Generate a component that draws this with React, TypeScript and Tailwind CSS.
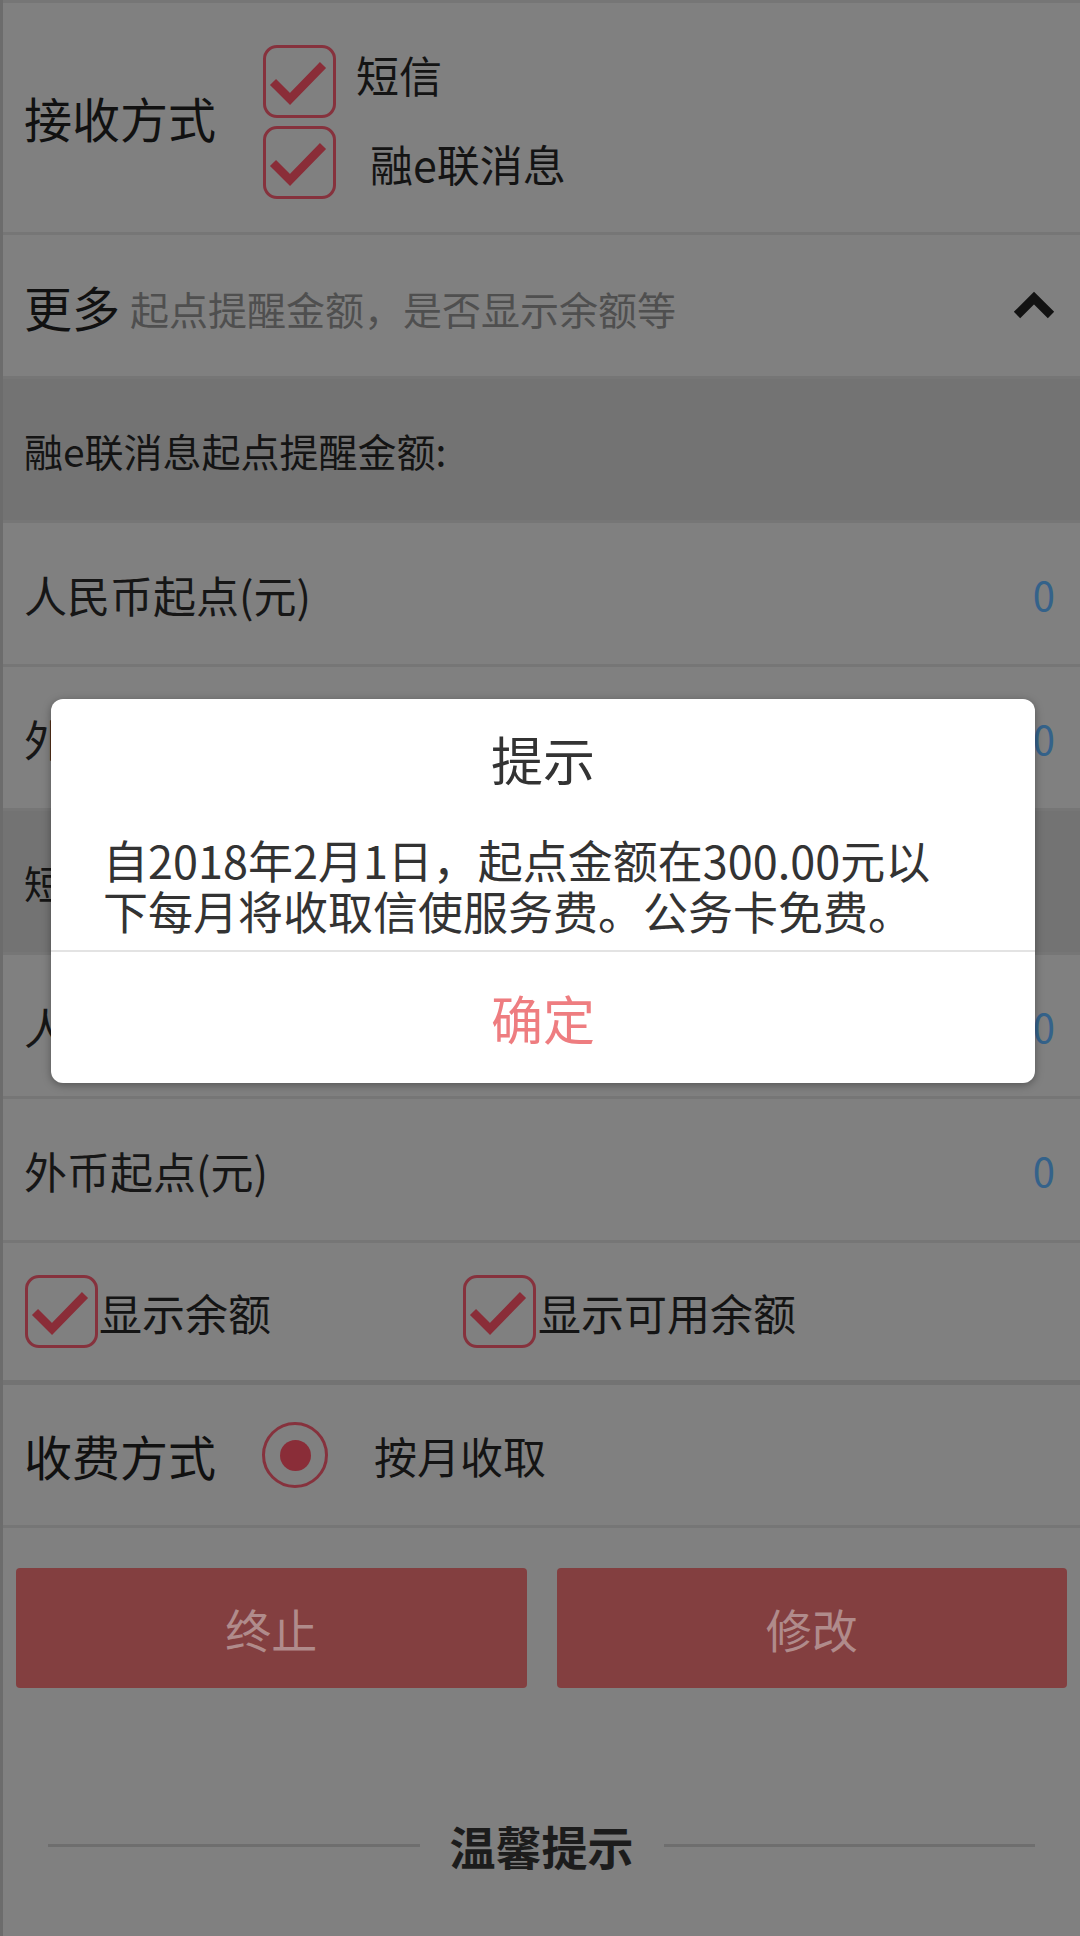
import React from "react";

const FONT = { fontFamily: '"Noto Sans CJK SC", "Noto Sans", sans-serif' };

function CheckBox() {
  return (
    <div className="w-[73px] h-[73px] shrink-0 rounded-[14px] border-[3px] border-[#86323d] flex items-center justify-center">
      <svg width="73" height="73" viewBox="0 0 73 73" className="shrink-0">
        <polyline
          points="10,37 27,54 60,20"
          fill="none"
          stroke="#8a2d38"
          strokeWidth="8.5"
          strokeLinecap="butt"
          strokeLinejoin="miter"
        />
      </svg>
    </div>
  );
}

function Radio() {
  return (
    <div className="w-[66px] h-[66px] shrink-0 rounded-full border-[3px] border-[#86323d] flex items-center justify-center">
      <div className="w-[31px] h-[31px] rounded-full bg-[#8a2d38]" />
    </div>
  );
}

function ValueRow({ label }: { label: string }) {
  return (
    <div className="h-[144px] border-b-[3px] border-[#767676] flex items-center justify-between pl-[21px] pr-[25px]">
      <span className="text-[43px] leading-[56px] text-[#161616]">{label}</span>
      <span className="text-[40px] leading-[56px] text-[#34628a]">0</span>
    </div>
  );
}

function HeaderRow({ label }: { label: string }) {
  return (
    <div className="h-[144px] border-b-[3px] border-[#767676] bg-[#737373] flex items-center pl-[21px]">
      <span className="text-[39px] leading-[50px] text-[#141414]">{label}</span>
    </div>
  );
}

export default function App() {
  return (
    <div
      className="relative w-[1080px] h-[1936px] overflow-hidden bg-[#808080] border-l-[3px] border-[#6c6c6c]"
      style={FONT}
    >
      {/* 接收方式 */}
      <div className="h-[235px] border-t-[3px] border-b-[3px] border-[#767676] flex items-center">
        <div className="w-[260px] shrink-0 pl-[21px] mb-[2px] text-[48px] leading-[56px] text-[#111111]">接收方式</div>
        <div className="self-start mt-[42px] flex flex-col gap-[8px]">
          <div className="flex items-start">
            <CheckBox />
            <span className="ml-[20px] mt-[4px] text-[43px] leading-[50px] text-[#141414]">短信</span>
          </div>
          <div className="flex items-center">
            <CheckBox />
            <span className="ml-[34px] text-[43px] leading-[50px] text-[#141414]">融e联消息</span>
          </div>
        </div>
      </div>

      {/* 更多 */}
      <div className="h-[144px] border-b-[3px] border-[#767676] flex items-center pl-[21px] pr-[25px]">
        <span className="text-[48px] leading-[56px] text-[#111111]">更多</span>
        <span className="ml-[10px] mt-[4px] text-[39px] leading-[50px] text-[#4f4f4f]">起点提醒金额，是否显示余额等</span>
        <div className="flex-1" />
        <svg width="42" height="30" viewBox="0 0 42 30" className="mb-[2px]">
          <polyline
            points="4,25 21,8 38,25"
            fill="none"
            stroke="#121212"
            strokeWidth="9"
            strokeLinecap="butt"
            strokeLinejoin="miter"
          />
        </svg>
      </div>

      <HeaderRow label="融e联消息起点提醒金额:" />
      <ValueRow label="人民币起点(元)" />
      <ValueRow label="外币起点(元)" />
      <HeaderRow label="短信起点提醒金额:" />
      <ValueRow label="人民币起点(元)" />
      <ValueRow label="外币起点(元)" />

      {/* 显示余额 */}
      <div className="h-[142px] border-b-[5px] border-[#737373] flex items-center pl-[22px]">
        <div className="w-[438px] shrink-0 flex items-center">
          <CheckBox />
          <span className="ml-[1px] text-[43px] leading-[50px] text-[#141414]">显示余额</span>
        </div>
        <div className="flex items-center">
          <CheckBox />
          <span className="ml-[2px] text-[43px] leading-[50px] text-[#141414]">显示可用余额</span>
        </div>
      </div>

      {/* 收费方式 */}
      <div className="h-[143px] border-b-[3px] border-[#767676] flex items-center">
        <div className="w-[259px] shrink-0 pl-[21px] text-[48px] leading-[56px] text-[#111111]">收费方式</div>
        <Radio />
        <span className="ml-[46px] text-[43px] leading-[50px] text-[#141414]">按月收取</span>
      </div>

      {/* buttons */}
      <div className="mt-[40px] px-[13px] flex gap-[30px]">
        <div className="flex-1 h-[120px] rounded-[4px] bg-[#833f40] flex items-center justify-center text-[46px] text-[#b08b8b]">
          终止
        </div>
        <div className="flex-1 h-[120px] rounded-[4px] bg-[#833f40] flex items-center justify-center text-[46px] text-[#b08b8b]">
          修改
        </div>
      </div>

      {/* 温馨提示 */}
      <div className="mt-[127px] px-[45px] flex items-center">
        <div className="flex-1 h-[3px] bg-[#6e6e6e]" />
        <span className="px-[30px] text-[46px] leading-[60px] font-bold text-[#1c1c1c]">温馨提示</span>
        <div className="flex-1 h-[3px] bg-[#6e6e6e]" />
      </div>

      {/* dialog */}
      <div className="absolute left-[48px] top-[699px] w-[984px] rounded-[12px] bg-white shadow-[0_2px_8px_rgba(0,0,0,0.35)] overflow-hidden">
        <div className="pt-[30px] text-center text-[52px] leading-[60px] text-[#333333]">提示</div>
        <div className="mt-[45px] pl-[52px] pr-[30px] pb-[14px] text-[45px] leading-[51px] text-[#333333]">
          自2018年2月1日，起点金额在300.00元以
          <br />
          下每月将收取信使服务费。公务卡免费。
        </div>
        <div className="h-[2px] bg-[#e3e3e3]" />
        <div className="h-[131px] flex items-center justify-center text-[52px] text-[#ee7d80]">确定</div>
      </div>
    </div>
  );
}
